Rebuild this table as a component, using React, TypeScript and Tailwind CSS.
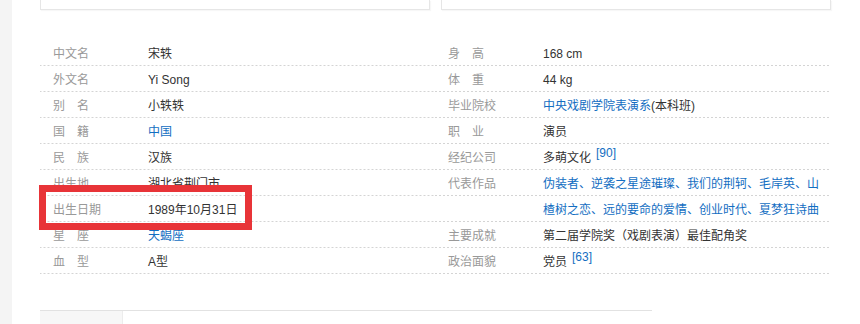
import React from "react";

type Cell = { label: string; value: React.ReactNode };

const Link = ({ children }: { children: React.ReactNode }) => (
  <span className="text-[#136ec2]">{children}</span>
);

const Sup = ({ children }: { children: React.ReactNode }) => (
  <span className="relative -top-[5px] ml-[5px] text-[12px] text-[#136ec2]">{children}</span>
);

const left: Cell[] = [
  { label: "中文名", value: "宋轶" },
  { label: "外文名", value: "Yi Song" },
  { label: "别\u3000名", value: "小轶轶" },
  { label: "国\u3000籍", value: <Link>中国</Link> },
  { label: "民\u3000族", value: "汉族" },
  { label: "出生地", value: "湖北省荆门市" },
  { label: "出生日期", value: "1989年10月31日" },
  { label: "星\u3000座", value: <Link>天蝎座</Link> },
  { label: "血\u3000型", value: "A型" },
];

const right: Cell[] = [
  { label: "身\u3000高", value: "168 cm" },
  { label: "体\u3000重", value: "44 kg" },
  {
    label: "毕业院校",
    value: (
      <>
        <Link>中央戏剧学院表演系</Link>(本科班)
      </>
    ),
  },
  { label: "职\u3000业", value: "演员" },
  {
    label: "经纪公司",
    value: (
      <>
        多萌文化<Sup>[90]</Sup>
      </>
    ),
  },
  { label: "代表作品", value: <Link>伪装者、逆袭之星途璀璨、我们的荆轲、毛岸英、山</Link> },
  { label: "", value: <Link>楂树之恋、远的要命的爱情、创业时代、夏梦狂诗曲</Link> },
  { label: "主要成就", value: "第二届学院奖（戏剧表演）最佳配角奖" },
  {
    label: "政治面貌",
    value: (
      <>
        党员<Sup>[63]</Sup>
      </>
    ),
  },
];

const Row = ({ cell }: { cell: Cell }) => (
  <div className="flex h-[26px] items-center whitespace-nowrap bg-[linear-gradient(to_right,#d4d4d4_50%,transparent_50%)] bg-[length:4px_1px] bg-bottom bg-repeat-x pl-[13px] pt-[1px]">
    <div className="w-[95px] shrink-0 text-[#999999]">{cell.label}</div>
    <div className="text-[#333333]">{cell.value}</div>
  </div>
);

export default function App() {
  return (
    <div
      className="flex h-[324px] w-[860px] overflow-hidden bg-white text-[12px] leading-[16px]"
      style={{ fontFamily: '"Liberation Sans", Arial, "Noto Sans CJK SC", sans-serif' }}
    >
      <div className="h-full w-[12px] shrink-0 bg-[#f4f4f4]" />
      <div className="relative flex w-[848px] flex-col pl-[28px]">
        {/* top cards */}
        <div className="flex h-[10px] gap-[11px]">
          <div className="h-[10px] w-[390px] border-x border-b border-[#e6e6e6] shadow-[1px_1px_1px_rgba(0,0,0,0.03)]" />
          <div className="h-[10px] w-[390px] border-x border-b border-[#e6e6e6] shadow-[1px_1px_1px_rgba(0,0,0,0.03)]" />
        </div>

        {/* info table */}
        <div className="mt-[30px] flex w-[791px]">
          <div className="w-[395px]">
            {left.map((c, i) => (
              <Row key={i} cell={c} />
            ))}
          </div>
          <div className="w-[396px]">
            {right.map((c, i) => (
              <Row key={i} cell={c} />
            ))}
          </div>
        </div>

        {/* bottom tabs */}
        <div className="mt-[36px] w-[612px] border-t border-[#e2e2e2]">
          <div className="h-[14px] w-[83px] border-r border-[#ececec] bg-[#f7f7f7]" />
        </div>

        {/* red highlight overlay */}
        <div className="pointer-events-none absolute left-[27px] top-[185px] h-[45px] w-[213px] border-[7px] border-[#e83438]" />
      </div>
    </div>
  );
}
